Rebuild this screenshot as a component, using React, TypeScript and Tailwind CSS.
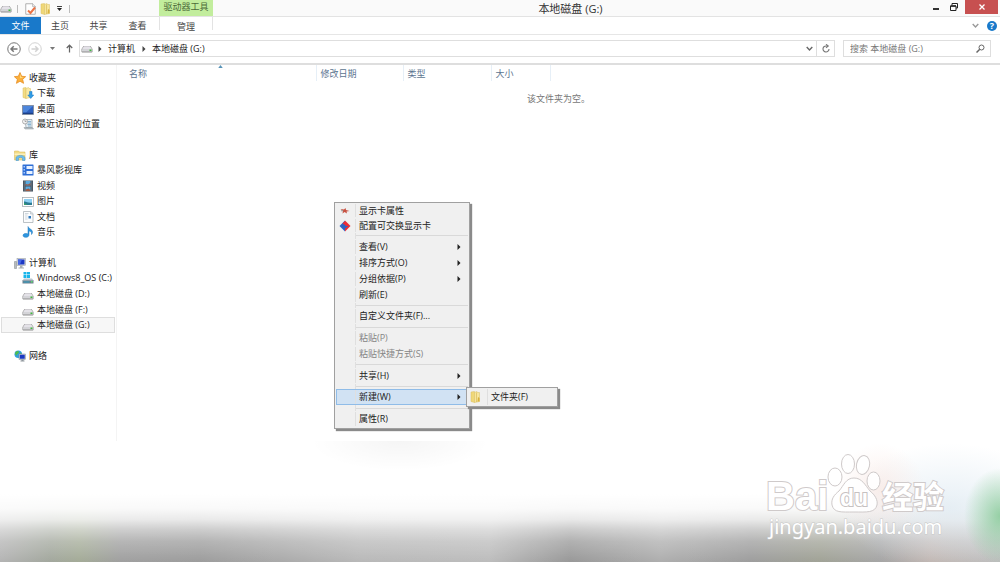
import type { ReactNode } from "react";
import clsx from "clsx";

const DriveIcon = () => (
  <svg viewBox="0 0 24 18" className="h-[9px] w-3 shrink-0" aria-hidden="true">
    <path d="M5 4h14l4 6v5l-1 2H2l-1-2v-5z" fill="#8f8f8f" />
    <path d="M6 4.500h12l4 5.500H2z" fill="#e4e2e8" />
    <rect x="2" y="10" width="20" height="5" rx="1" fill="#d4d4d8" />
    <rect x="17" y="11" width="4" height="3" fill="#3fb83f" />
  </svg>
);

const FolderIcon = () => (
  <svg viewBox="0 0 22 24" className="h-3 w-[11px] shrink-0" aria-hidden="true">
    <path d="M2 2l7-1v22l-7-2z" fill="#f0d878" stroke="#d9be62" />
    <path d="M9 3l5-2 1 2h4v18l-10 2z" fill="#f7e69c" stroke="#d9be62" />
    <path d="M13 3v19" stroke="#d0ab3f" />
    <path d="M16 12l3 2v7h-4z" fill="#d9b23e" />
  </svg>
);

const CheckDocIcon = () => (
  <svg viewBox="0 0 22 24" className="h-3 w-[11px] shrink-0" aria-hidden="true">
    <path d="M1.500 1.500h14l5 5v16h-19z" fill="#fff" stroke="#9a9a9a" strokeWidth="1.500" />
    <path d="M15 1v6h6" fill="#e8e8e8" stroke="#9a9a9a" />
    <path d="M6 15l5 5 9-11" fill="none" stroke="#ea7345" strokeWidth="4" />
  </svg>
);

const StarIcon = () => (
  <svg viewBox="0 0 24 24" className="h-3 w-3" aria-hidden="true">
    <path d="M12 1l3.300 7.500 8 .8-6 5.400 1.800 8L12 18.500l-7.100 4.200 1.800-8-6-5.400 8-.8z" fill="#fbb03b" stroke="#e58a1c" strokeWidth="1.500" />
    <path d="M12 4l2.300 6 5 .5-7 2z" fill="#ffe08a" />
  </svg>
);

const DownloadIcon = () => (
  <svg viewBox="0 0 24 24" className="h-3 w-3" aria-hidden="true">
    <path d="M2 2l6-1v22l-6-2z" fill="#f4dd84" stroke="#d9be62" />
    <path d="M8 3l5-2 1 2h3v18l-9 2z" fill="#f9e9a4" stroke="#d9be62" />
    <path d="M15 9h5v7h3.500L17.500 23l-6-7H15z" fill="#2f9be6" stroke="#1b78c2" />
  </svg>
);

const DesktopIcon = () => (
  <svg viewBox="0 0 24 20" className="h-2.5 w-3" aria-hidden="true">
    <rect x="1" y="1" width="22" height="18" fill="#2f62c0" stroke="#7d8796" strokeWidth="1.500" />
    <path d="M2 2h20L8 15H2z" fill="#4d86dc" />
    <rect x="2" y="15.500" width="20" height="2.500" fill="#1c3f86" />
  </svg>
);

const RecentIcon = () => (
  <svg viewBox="0 0 24 24" className="h-3 w-3" aria-hidden="true">
    <path d="M6 3h14v16H8z" fill="#e4edf3" stroke="#9aa5ad" strokeWidth="1.500" />
    <path d="M11 7h7M11 10h7M11 13h7M12 16h6" stroke="#6fa0c4" strokeWidth="1.500" />
    <circle cx="6" cy="7" r="5" fill="#f3f3f3" stroke="#9b9b9b" strokeWidth="1.500" />
    <path d="M6 4v3h3" stroke="#666" fill="none" />
    <path d="M4 19h17l2 3H6z" fill="#b9c2c8" stroke="#8a949b" />
  </svg>
);

const LibraryIcon = () => (
  <svg viewBox="0 0 24 22" className="h-[11px] w-3" aria-hidden="true">
    <path d="M1 2h8l2 2h11v16H1z" fill="#f3dc86" stroke="#d4b552" />
    <path d="M1 7h22v3H1z" fill="#fbf0bd" />
    <path d="M4 21v-5c0-7 18-7 18 0v5h-5v-4c0-3-8-3-8 0v4z" fill="#6bbcee" stroke="#3d93cb" />
  </svg>
);

const StormIcon = () => (
  <svg viewBox="0 0 24 24" className="h-3 w-3" aria-hidden="true">
    <rect x="1" y="1" width="22" height="22" rx="1" fill="#2f6fd6" />
    <path d="M9 4h12v6H9zM9 14h12v6H9z" fill="#e9f2ff" />
    <path d="M3 4h3v3H3zM3 10h3v3H3zM3 16h3v3H3z" fill="#a9cbff" />
  </svg>
);

const VideoIcon = () => (
  <svg viewBox="0 0 24 24" className="h-3 w-3" aria-hidden="true">
    <rect x="2" y="1" width="20" height="22" fill="#42505c" />
    <path d="M7 2h10v9H7zM7 13h10v9H7z" fill="#59a9de" />
    <path d="M7 8l5 1 5-3v5H7zM7 19l6-2 4 3v2H7z" fill="#a05a43" />
    <path d="M4.500 3v18M19.500 3v18" stroke="#aab4bc" strokeWidth="1.500" strokeDasharray="2 2" />
  </svg>
);

const PictureIcon = () => (
  <svg viewBox="0 0 24 20" className="h-2.5 w-3" aria-hidden="true">
    <rect x="1" y="1" width="22" height="18" fill="#fff" stroke="#a3a9ae" strokeWidth="1.500" />
    <rect x="4" y="4" width="16" height="12" fill="#8fd0f3" />
    <path d="M4 9c5-1 8 4 16 2v5H4z" fill="#2c7c93" />
    <path d="M4 12l7 4H4z" fill="#3da06c" />
  </svg>
);

const DocumentIcon = () => (
  <svg viewBox="0 0 24 24" className="h-3 w-3" aria-hidden="true">
    <path d="M3 1h14l5 4v18H3z" fill="#fbfcfd" stroke="#a6adb3" strokeWidth="1.500" />
    <path d="M6 5h7M6 8h5M6 12h5M6 16h5" stroke="#c2cbd2" strokeWidth="1.500" />
    <path d="M17 1v5h5" fill="#dfe5ea" stroke="#a6adb3" />
    <rect x="13" y="10" width="5" height="5" fill="#2f78bd" />
  </svg>
);

const MusicIcon = () => (
  <svg viewBox="0 0 24 24" className="h-3 w-3" aria-hidden="true">
    <path d="M12 1c1 5 9 5 9 11 0 2-1 4-2 5 1-5-2-7-5-7v8c0 6-12 6-12 1 0-4 6-5 10-3z" fill="#2f97e0" stroke="#1c74ba" />
  </svg>
);

const ComputerIcon = () => (
  <svg viewBox="0 0 24 22" className="h-[11px] w-3" aria-hidden="true">
    <path d="M1 7h4v14H1z" fill="#b7bcc0" stroke="#7f868b" />
    <rect x="6" y="1" width="17" height="14" fill="#d7dade" stroke="#8f969c" />
    <rect x="8" y="3" width="13" height="10" fill="#1c38c4" />
    <path d="M8 3h8l-4 10H8z" fill="#4668e6" />
    <path d="M12 15h5v4h3v2H9v-2h3z" fill="#a9afb4" />
  </svg>
);

const SystemDriveIcon = () => (
  <svg viewBox="0 0 24 24" className="h-3 w-3" aria-hidden="true">
    <path d="M3 0h6v5H3zM10 0h6v5h-6zM3 6h6v6H3zM10 6h6v6h-6z" fill="#19b5ea" />
    <path d="M1 16h22v7H1z" fill="#6f7f8c" />
    <path d="M4 13h16l3 4H1z" fill="#bac7d0" />
    <path d="M3 20h12" stroke="#2aa3c9" strokeWidth="2" />
    <path d="M18 18h3v3h-3z" fill="#59e070" />
  </svg>
);

const NetworkIcon = () => (
  <svg viewBox="0 0 24 24" className="h-3 w-3" aria-hidden="true">
    <circle cx="8.500" cy="8.500" r="7.500" fill="#2f9fe0" />
    <path d="M3 4c4-3 6-2 7 0 0 4-5 3-4 7-3 0-5-4-3-7zM10 10l4-5 2 5-5 5z" fill="#4fbd4d" />
    <rect x="10" y="8" width="13" height="11" fill="#d7dade" stroke="#7f868b" />
    <rect x="11.500" y="9.500" width="10" height="8" fill="#1b39c2" />
    <path d="M15 19h4v2h2v2h-8v-2h2z" fill="#8f979d" />
  </svg>
);

const Chevron = ({ className }: { className?: string }) => (
  <svg viewBox="0 0 10 10" className={clsx("h-[7px] w-[7px] shrink-0", className)} aria-hidden="true">
    <path d="M1 3l4 4 4-4" fill="none" stroke="currentColor" strokeWidth="2" />
  </svg>
);

const RightTriangle = () => (
  <svg viewBox="0 0 4 6" className="h-1.5 w-1 shrink-0" aria-hidden="true">
    <path d="M0.500 0l3 3-3 3z" fill="currentColor" />
  </svg>
);

const DownTriangle = () => (
  <svg viewBox="0 0 5 3" className="h-[3px] w-[5px] shrink-0" aria-hidden="true">
    <path d="M0 0h5L2.500 3z" fill="currentColor" />
  </svg>
);

function TitleBar() {
  return (
    <header className="flex h-[17px] border-b border-[#e3e3e3] bg-[#fafafa]">
      <div className="flex w-[159px] shrink-0 items-center pt-px">
        <DriveIcon />
        <span className="ml-[5px] h-2 w-px bg-[#bbb]" />
        <button type="button" aria-label="属性" className="ml-[7px]"><CheckDocIcon /></button>
        <button type="button" aria-label="新建文件夹" className="ml-1"><FolderIcon /></button>
        <button type="button" aria-label="自定义快速访问工具栏" className="ml-1.5 flex flex-col items-center gap-px text-[#222]">
          <span className="h-px w-[5px] bg-[#444]" />
          <DownTriangle />
        </button>
        <span className="ml-[7px] h-2 w-px bg-[#bbb]" />
      </div>
      <div className="flex w-[54px] shrink-0 items-center justify-center bg-[#c2ed9d] pb-0.5 text-[#4c6a38]">驱动器工具</div>
      <h1 className="flex flex-1 items-center justify-center pt-px text-[11px] text-[#333]">本地磁盘 (G:)</h1>
      <div className="mr-0.5 flex h-3.5 text-[#222]">
        <button type="button" aria-label="最小化" className="flex w-[19px] items-center justify-center pr-1">
          <span className="mt-[3px] h-0.5 w-1.5 bg-[#333]" />
        </button>
        <button type="button" aria-label="向下还原" className="flex w-[18px] items-center justify-center pr-1">
          <svg viewBox="0 0 16 16" className="h-2 w-2" aria-hidden="true">
            <path d="M4 4V1h11v9h-3" fill="none" stroke="currentColor" strokeWidth="2" />
            <path d="M1 6h11v9H1z" fill="none" stroke="currentColor" strokeWidth="2" />
            <path d="M1 6h11" stroke="currentColor" strokeWidth="3" />
          </svg>
        </button>
        <button type="button" aria-label="关闭" className="flex w-[33px] items-center justify-center bg-[#c75050] text-white">
          <svg viewBox="0 0 12 12" className="h-1.5 w-1.5" aria-hidden="true">
            <path d="M1 1l10 10M11 1L1 11" stroke="currentColor" strokeWidth="2.500" />
          </svg>
        </button>
      </div>
    </header>
  );
}

function RibbonTabs() {
  return (
    <nav className="flex h-[18px] items-stretch border-b border-[#e6e6e6] bg-white text-[#444]">
      <button type="button" className="w-[41px] bg-[#1979ca] text-white">文件</button>
      <button type="button" className="w-[38px]">主页</button>
      <button type="button" className="w-[39px]">共享</button>
      <button type="button" className="w-[39px]">查看</button>
      <button type="button" className="ml-0.5 mb-1 w-[54px] border-x border-[#e3e3e3] pt-1">管理</button>
      <div className="ml-auto flex items-center gap-2 pr-[3px]">
        <button type="button" aria-label="最小化功能区" className="text-[#999]"><Chevron /></button>
        <button type="button" aria-label="帮助" className="flex h-2.5 w-2.5 items-center justify-center rounded-full bg-[#1979ca] font-bold text-white">?</button>
      </div>
    </nav>
  );
}

const CircleArrow = ({ flip }: { flip?: boolean }) => (
  <svg viewBox="0 0 28 28" className={clsx("h-3.5 w-3.5", flip && "rotate-180")} aria-hidden="true">
    <circle cx="14" cy="14" r="12.500" fill="none" stroke="currentColor" strokeWidth="2" />
    <path d="M21 14H8M13.500 8.500L8 14l5.500 5.500" fill="none" stroke="currentColor" strokeWidth="3" />
  </svg>
);

function AddressBar() {
  return (
    <div className="flex h-[30px] items-center border-b-2 border-[#dedede] bg-white pr-[9px] pb-px pl-[7px]">
      <button type="button" aria-label="返回" className="text-[#777]"><CircleArrow /></button>
      <button type="button" aria-label="前进" className="ml-[7px] text-[#d2d2d2]"><CircleArrow flip /></button>
      <button type="button" aria-label="最近浏览的位置" className="ml-2 text-[#777]"><DownTriangle /></button>
      <button type="button" aria-label="上移" className="ml-[11px] text-[#666]">
        <svg viewBox="0 0 14 18" className="h-[9px] w-[7px]" aria-hidden="true">
          <path d="M7 17V3M1.500 8L7 2.500 12.500 8" fill="none" stroke="currentColor" strokeWidth="2.500" />
        </svg>
      </button>
      <div className="ml-1.5 flex h-[17px] flex-1 items-center border border-[#dedede] pl-px text-[#222]">
        <DriveIcon />
        <span className="ml-[5px] text-[#444]"><RightTriangle /></span>
        <a href="#computer" className="ml-1.5">计算机</a>
        <span className="ml-[7px] text-[#444]"><RightTriangle /></span>
        <a href="#drive-g" className="ml-1.5">本地磁盘 (G:)</a>
        <button type="button" aria-label="以前的位置" className="ml-auto mr-[3px] text-[#666]"><Chevron /></button>
        <button type="button" aria-label="刷新" className="flex h-full w-[18px] items-center justify-center border-l border-[#dedede] text-[#777]">
          <svg viewBox="0 0 16 18" className="h-[9px] w-2" aria-hidden="true">
            <path d="M9 4a6 6 0 1 0 5 6M8 0.500L12.500 4 8 7.500" fill="none" stroke="currentColor" strokeWidth="2.200" />
          </svg>
        </button>
      </div>
      <label className="ml-2 flex h-[17px] w-[148px] items-center border border-[#dedede] pr-[5px] pl-1.5">
        <input type="search" aria-label="搜索" placeholder="搜索 本地磁盘 (G:)" className="w-full min-w-0 bg-transparent outline-none placeholder:text-[#777]" />
        <svg viewBox="0 0 18 18" className="h-[9px] w-[9px] shrink-0 text-[#666]" aria-hidden="true">
          <circle cx="11" cy="7" r="5" fill="none" stroke="currentColor" strokeWidth="2" />
          <path d="M7.500 10.500L1 17" stroke="currentColor" strokeWidth="3" />
        </svg>
      </label>
    </div>
  );
}

type Place = { label: string; icon: ReactNode; selected?: boolean };

const groups: { height: string; places: Place[] }[] = [
  {
    height: "h-[62px]",
    places: [
      { label: "收藏夹", icon: <StarIcon /> },
      { label: "下载", icon: <DownloadIcon /> },
      { label: "桌面", icon: <DesktopIcon /> },
      { label: "最近访问的位置", icon: <RecentIcon /> },
    ],
  },
  {
    height: "h-[93px]",
    places: [
      { label: "库", icon: <LibraryIcon /> },
      { label: "暴风影视库", icon: <StormIcon /> },
      { label: "视频", icon: <VideoIcon /> },
      { label: "图片", icon: <PictureIcon /> },
      { label: "文档", icon: <DocumentIcon /> },
      { label: "音乐", icon: <MusicIcon /> },
    ],
  },
  {
    height: "h-[78px]",
    places: [
      { label: "计算机", icon: <ComputerIcon /> },
      { label: "Windows8_OS (C:)", icon: <SystemDriveIcon /> },
      { label: "本地磁盘 (D:)", icon: <DriveIcon /> },
      { label: "本地磁盘 (F:)", icon: <DriveIcon /> },
      { label: "本地磁盘 (G:)", icon: <DriveIcon />, selected: true },
    ],
  },
  { height: "h-[15px]", places: [{ label: "网络", icon: <NetworkIcon /> }] },
];

function Sidebar() {
  return (
    <aside className="flex w-[117px] shrink-0 flex-col gap-[15px] border-r border-[#f4f4f4] pt-[5px] pr-px pl-px">
      {groups.map((group) => (
        <ul key={group.places[0].label} className={clsx("grid auto-rows-fr", group.height)}>
          {group.places.map((place, index) => (
            <li key={place.label} className="min-h-0">
              <a
                href="#place"
                className={clsx(
                  "flex h-full items-center gap-[3px] border whitespace-nowrap text-[#222]",
                  index === 0 ? "pl-3" : "pl-5",
                  place.selected ? "border-[#dedede] bg-[#f7f7f7]" : "border-transparent",
                )}
              >
                <span className="flex h-3 w-3 shrink-0 items-end justify-center">{place.icon}</span>
                {place.label}
              </a>
            </li>
          ))}
        </ul>
      ))}
    </aside>
  );
}

function FileList() {
  return (
    <section className="flex-1">
      <table className="w-full table-fixed border-collapse text-left text-[#5c7590]">
        <thead>
          <tr className="h-4">
            <th className="relative w-[199px] border-r border-[#e6eff7] p-0 pt-0.5 pl-3 font-normal">
              名称
              <svg viewBox="0 0 6 4" className="absolute top-0 left-[101px] h-[3px] w-[5px]" aria-hidden="true">
                <path d="M0 4l3-4 3 4z" fill="#5793b8" />
              </svg>
            </th>
            <th className="w-[87px] border-r border-[#e6eff7] p-0 pt-0.5 pl-1 font-normal">修改日期</th>
            <th className="w-[88px] border-r border-[#e6eff7] p-0 pt-0.5 pl-1 font-normal">类型</th>
            <th className="w-[59px] border-r border-[#e6eff7] p-0 pt-0.5 pl-1 font-normal">大小</th>
            <th className="p-0" aria-label="其他" />
          </tr>
        </thead>
        <tbody>
          <tr>
            <td colSpan={5} className="p-0 pt-3 text-center text-[#777]">该文件夹为空。</td>
          </tr>
        </tbody>
      </table>
    </section>
  );
}

type Entry = { label: string; icon?: ReactNode; arrow?: boolean; disabled?: boolean; active?: boolean; short?: boolean };

const menu: Entry[][] = [
  [
    {
      label: "显示卡属性",
      short: true,
      icon: (
        <svg viewBox="0 0 20 16" className="h-2 w-2.5" aria-hidden="true">
          <path d="M1 4l7 1 3-3 1 4 7 2-6 1 1 4-5-3-4 3 1-5z" fill="#c8503f" />
          <path d="M2 5l6 3-5 1z" fill="#999" />
        </svg>
      ),
    },
    {
      label: "配置可交换显示卡",
      short: true,
      icon: (
        <svg viewBox="0 0 24 24" className="h-3 w-3" aria-hidden="true">
          <path d="M12 1v22L1 12z" fill="#2b62c4" />
          <path d="M12 1l11 11-11 11z" fill="#ec2c35" />
          <path d="M5 13l8-3v2h6l-7 5v-4z" fill="#2b62c4" />
          <path d="M7 7l5-5v8z" fill="#ec2c35" />
        </svg>
      ),
    },
  ],
  [
    { label: "查看(V)", arrow: true },
    { label: "排序方式(O)", arrow: true },
    { label: "分组依据(P)", arrow: true },
    { label: "刷新(E)" },
  ],
  [{ label: "自定义文件夹(F)..." }],
  [
    { label: "粘贴(P)", disabled: true },
    { label: "粘贴快捷方式(S)", disabled: true },
  ],
  [{ label: "共享(H)", arrow: true }],
  [{ label: "新建(W)", arrow: true, active: true }],
  [{ label: "属性(R)" }],
];

function ContextMenu() {
  return (
    <>
      <div
        role="menu"
        className="absolute top-[137px] left-[334px] flex h-[227px] w-[136px] flex-col border border-[#a0a0a0] bg-[#f0f0f0] px-px pb-px shadow-[2px_2px_1px_#8a8a8a]"
      >
        {menu.map((section, index) => (
          <div key={section[0].label} className={clsx("flex flex-col", index > 0 && "grow")}>
            {index > 0 && (
              <div className="flex grow items-center">
                <span className="h-full w-5 shrink-0 border-r border-[#dfdfdf]" />
                <span className="h-px flex-1 bg-[#d9d9d9]" />
              </div>
            )}
            {section.map((entry) => (
              <button
                key={entry.label}
                type="button"
                role="menuitem"
                disabled={entry.disabled}
                className={clsx(
                  "flex w-full shrink-0 items-center border pr-1 text-left whitespace-nowrap",
                  entry.short ? "h-[15px]" : "h-4",
                  entry.active ? "border-[#8fbce8] bg-[#d1e2f3]" : "border-transparent",
                  entry.disabled ? "text-[#858585]" : "text-[#222]",
                )}
              >
                <span className="mr-[3px] flex h-full w-[19px] shrink-0 items-center justify-center border-r border-[#dfdfdf] pr-0.5">
                  {entry.icon}
                </span>
                <span className="flex-1">{entry.label}</span>
                {entry.arrow && <span className="mr-0.5"><RightTriangle /></span>}
              </button>
            ))}
          </div>
        ))}
      </div>
      <div
        role="menu"
        className="absolute top-[322px] left-[466px] flex h-5 w-[92px] border border-[#a0a0a0] bg-[#f0f0f0] p-px shadow-[2px_2px_1px_#8a8a8a]"
      >
        <button type="button" role="menuitem" className="flex w-full items-center text-[#222]">
          <span className="mr-[3px] flex h-full w-5 items-center justify-center border-r border-[#dfdfdf] pr-1"><FolderIcon /></span>
          文件夹(F)
        </button>
      </div>
    </>
  );
}

function Watermark() {
  return (
    <svg viewBox="0 0 190 92" className="absolute right-[50px] bottom-4 h-[92px] w-[190px]" role="img" aria-label="Baidu 经验">
      <g fill="#fff" fillOpacity="0.9" stroke="#cfcaca" strokeWidth="1">
        <ellipse cx="75" cy="23" rx="7" ry="9" />
        <ellipse cx="88" cy="10" rx="6.500" ry="9.500" />
        <ellipse cx="103" cy="11" rx="6.500" ry="9.500" transform="rotate(12 103 11)" />
        <ellipse cx="113.500" cy="27" rx="6.500" ry="9" />
        <path d="M94 24c8 0 11 7 16 13 5 4 8 9 7 14-2 8-10 7-23 7s-20 1-22-7c-1-6 2-10 7-14 5-6 7-13 15-13z" />
      </g>
      <g fill="#fff" stroke="#cfcaca" strokeWidth="2" paintOrder="stroke" className="font-['Liberation_Sans','Noto_Sans_CJK_SC',sans-serif] font-bold">
        <text x="6" y="56" fontSize="40">Bai</text>
        <text x="122" y="54" fontSize="31">经验</text>
        <text x="80" y="52" fontSize="23" stroke="#c6c1c1">du</text>
      </g>
      <text x="9" y="80" fontSize="20" fill="#fff" stroke="#c9c9c9" strokeWidth="1" paintOrder="stroke" className="font-['Noto_Sans',sans-serif]">jingyan.baidu.com</text>
    </svg>
  );
}

function Wallpaper() {
  return (
    <footer className="relative min-h-[121px] flex-1 overflow-hidden bg-[linear-gradient(90deg,#b4b4b4_0%,#a2a79d_5%,#a3ab97_8%,#9f9f9f_12%,#9c9c9c_20%,#b8b8b8_36%,#bcbcbc_49%,#989898_57%,#aeaeae_66%,#9d9d9d_75%,#a0a296_82%,#a5a5a5_88%,#bfb3ae_93%,#bcbcbc_100%)]">
      <div className="absolute inset-0 bg-[linear-gradient(180deg,#fff_0%,#fff_44%,rgba(255,255,255,0.94)_56%,rgba(255,255,255,0.78)_65%,rgba(255,255,255,0.5)_73%,rgba(255,255,255,0.24)_83%,rgba(255,255,255,0)_100%)]" />
      <div className="absolute inset-0 bg-[radial-gradient(90px_30px_at_40%_0%,rgba(0,0,0,0.04)_0%,rgba(0,0,0,0)_100%)]" />
      <div className="absolute inset-0 bg-[radial-gradient(110px_64px_at_95%_55%,rgba(218,231,240,0.65)_0%,rgba(218,231,240,0)_100%)]" />
      <div className="absolute inset-0 bg-[radial-gradient(45px_46px_at_88%_40%,rgba(248,228,222,0.6)_0%,rgba(248,228,222,0)_100%)]" />
      <div className="absolute inset-0 bg-[radial-gradient(36px_48px_at_100%_62%,rgba(140,204,156,0.9)_0%,rgba(140,204,156,0)_100%)]" />
      <Watermark />
    </footer>
  );
}

export default function App() {
  return (
    <div className="flex min-h-screen w-full flex-col overflow-hidden bg-white font-['Open_Sans','Noto_Sans_CJK_SC',sans-serif] text-[9px] leading-3">
      <TitleBar />
      <RibbonTabs />
      <AddressBar />
      <main className="relative flex min-h-[376px]">
        <Sidebar />
        <FileList />
        <ContextMenu />
      </main>
      <Wallpaper />
    </div>
  );
}
